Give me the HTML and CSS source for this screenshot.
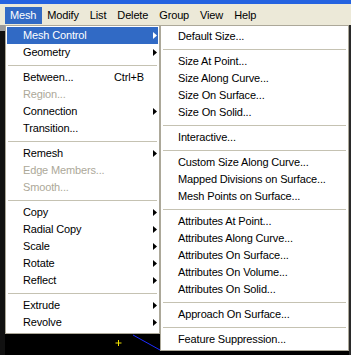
FILE: index.html
```html
<!DOCTYPE html>
<html lang="en">
<head>
    <meta charset="UTF-8">
    <meta name="viewport" content="width=device-width, initial-scale=1.0">
    <title>Mesh Menu</title>
    <link rel="stylesheet" href="styles.css">
</head>
<body>
    <div class="window">
        <div class="titlebar"></div>

        <!-- Menu bar -->
        <div class="menubar">
            <span class="menubar-item active">Mesh</span>
            <span class="menubar-item">Modify</span>
            <span class="menubar-item">List</span>
            <span class="menubar-item">Delete</span>
            <span class="menubar-item">Group</span>
            <span class="menubar-item">View</span>
            <span class="menubar-item">Help</span>
        </div>

        <div class="workspace">
            <div class="left-strip"></div>

            <!-- Mesh menu -->
            <div class="menu main-menu">
                <div class="item selected"><span class="label">Mesh Control</span><span class="arrow"><svg width="4" height="7" viewBox="0 0 4 7"><polygon points="0,0 4,3.5 0,7"/></svg></span></div>
                <div class="item"><span class="label">Geometry</span><span class="arrow"><svg width="4" height="7" viewBox="0 0 4 7"><polygon points="0,0 4,3.5 0,7"/></svg></span></div>
                <div class="sep"></div>
                <div class="item"><span class="label">Between...</span><span class="shortcut">Ctrl+B</span><span class="arrow"></span></div>
                <div class="item disabled"><span class="label">Region...</span><span class="arrow"></span></div>
                <div class="item"><span class="label">Connection</span><span class="arrow"><svg width="4" height="7" viewBox="0 0 4 7"><polygon points="0,0 4,3.5 0,7"/></svg></span></div>
                <div class="item"><span class="label">Transition...</span><span class="arrow"></span></div>
                <div class="sep"></div>
                <div class="item"><span class="label">Remesh</span><span class="arrow"><svg width="4" height="7" viewBox="0 0 4 7"><polygon points="0,0 4,3.5 0,7"/></svg></span></div>
                <div class="item disabled"><span class="label">Edge Members...</span><span class="arrow"></span></div>
                <div class="item disabled"><span class="label">Smooth...</span><span class="arrow"></span></div>
                <div class="sep"></div>
                <div class="item"><span class="label">Copy</span><span class="arrow"><svg width="4" height="7" viewBox="0 0 4 7"><polygon points="0,0 4,3.5 0,7"/></svg></span></div>
                <div class="item"><span class="label">Radial Copy</span><span class="arrow"><svg width="4" height="7" viewBox="0 0 4 7"><polygon points="0,0 4,3.5 0,7"/></svg></span></div>
                <div class="item"><span class="label">Scale</span><span class="arrow"><svg width="4" height="7" viewBox="0 0 4 7"><polygon points="0,0 4,3.5 0,7"/></svg></span></div>
                <div class="item"><span class="label">Rotate</span><span class="arrow"><svg width="4" height="7" viewBox="0 0 4 7"><polygon points="0,0 4,3.5 0,7"/></svg></span></div>
                <div class="item"><span class="label">Reflect</span><span class="arrow"><svg width="4" height="7" viewBox="0 0 4 7"><polygon points="0,0 4,3.5 0,7"/></svg></span></div>
                <div class="sep"></div>
                <div class="item"><span class="label">Extrude</span><span class="arrow"><svg width="4" height="7" viewBox="0 0 4 7"><polygon points="0,0 4,3.5 0,7"/></svg></span></div>
                <div class="item"><span class="label">Revolve</span><span class="arrow"><svg width="4" height="7" viewBox="0 0 4 7"><polygon points="0,0 4,3.5 0,7"/></svg></span></div>
            </div>

            <!-- Mesh Control submenu -->
            <div class="menu sub-menu">
                <div class="item"><span class="label">Default Size...</span></div>
                <div class="sep"></div>
                <div class="item"><span class="label">Size At Point...</span></div>
                <div class="item"><span class="label">Size Along Curve...</span></div>
                <div class="item"><span class="label">Size On Surface...</span></div>
                <div class="item"><span class="label">Size On Solid...</span></div>
                <div class="sep"></div>
                <div class="item"><span class="label">Interactive...</span></div>
                <div class="sep"></div>
                <div class="item"><span class="label">Custom Size Along Curve...</span></div>
                <div class="item"><span class="label">Mapped Divisions on Surface...</span></div>
                <div class="item"><span class="label">Mesh Points on Surface...</span></div>
                <div class="sep"></div>
                <div class="item"><span class="label">Attributes At Point...</span></div>
                <div class="item"><span class="label">Attributes Along Curve...</span></div>
                <div class="item"><span class="label">Attributes On Surface...</span></div>
                <div class="item"><span class="label">Attributes On Volume...</span></div>
                <div class="item"><span class="label">Attributes On Solid...</span></div>
                <div class="sep"></div>
                <div class="item"><span class="label">Approach On Surface...</span></div>
                <div class="sep"></div>
                <div class="item"><span class="label">Feature Suppression...</span></div>
            </div>

            <div class="right-strip"></div>

            <!-- bits of the model drawn on the canvas below the menus -->
            <svg class="canvas-marks" width="351" height="330" viewBox="0 0 351 330">
                <line x1="133" y1="310" x2="160" y2="325" stroke="#1e2cff" stroke-width="1"/>
                <line x1="115.5" y1="318" x2="121.5" y2="318" stroke="#f0e000" stroke-width="1"/>
                <line x1="118.5" y1="315" x2="118.5" y2="321" stroke="#f0e000" stroke-width="1"/>
            </svg>
        </div>
    </div>
</body>
</html>
```

FILE: styles.css
```css
body {
    margin: 0;
    padding: 0;
    background-color: #000;
    font-family: 'Liberation Sans', Arial, sans-serif;
    font-size: 11px;
    letter-spacing: -0.15px;
    color: #000;
}

.window {
    width: 351px;
    height: 355px;
    overflow: hidden;
    display: flex;
    flex-direction: column;
}

.titlebar {
    height: 4px;
    background-color: #2563e0;
}

.menubar {
    height: 21px;
    box-sizing: border-box;
    padding: 3px 0 0 5px;
    background-color: #ece9d8;
    display: flex;
}

.menubar-item {
    height: 17px;
    line-height: 17px;
    padding: 0 6px 0 5px;
}

.menubar-item.active {
    background-color: #316ac5;
    color: #fff;
}

.workspace {
    position: relative;
    flex: 1;
    display: flex;
    align-items: flex-start;
}

.left-strip {
    width: 5px;
    align-self: stretch;
    background: linear-gradient(#9a9a9a 0, #9a9a9a 6px, #111 6px);
}

.right-strip {
    flex: 1;
    align-self: stretch;
    background-color: #2a2a2a;
}

.menu {
    position: relative;
    z-index: 1;
    box-sizing: border-box;
    background-color: #fff;
    border: 1px solid #aca899;
}

.main-menu {
    width: 155px;
    padding: 1px 1px 2px 1px;
}

.sub-menu {
    width: 189px;
    padding: 2px 1px;
}

.item {
    height: 17px;
    line-height: 17px;
    display: flex;
    align-items: center;
    padding-left: 16px;
    white-space: nowrap;
}

.item .label {
    flex: 1;
}

.item.selected {
    background-color: #316ac5;
    color: #fff;
}

.item.disabled {
    color: #aca899;
}

.shortcut {
    padding-right: 0;
}

.arrow {
    width: 14px;
    height: 17px;
    display: flex;
    align-items: center;
    justify-content: flex-end;
    padding-right: 1px;
    box-sizing: border-box;
}

.arrow svg {
    fill: currentColor;
}

.sep {
    height: 8px;
    display: flex;
    align-items: center;
    padding: 0 1px;
}

.sep::before {
    content: "";
    flex: 1;
    height: 1px;
    background-color: #c5c2b2;
}

.canvas-marks {
    position: absolute;
    left: 0;
    top: 0;
}
```
